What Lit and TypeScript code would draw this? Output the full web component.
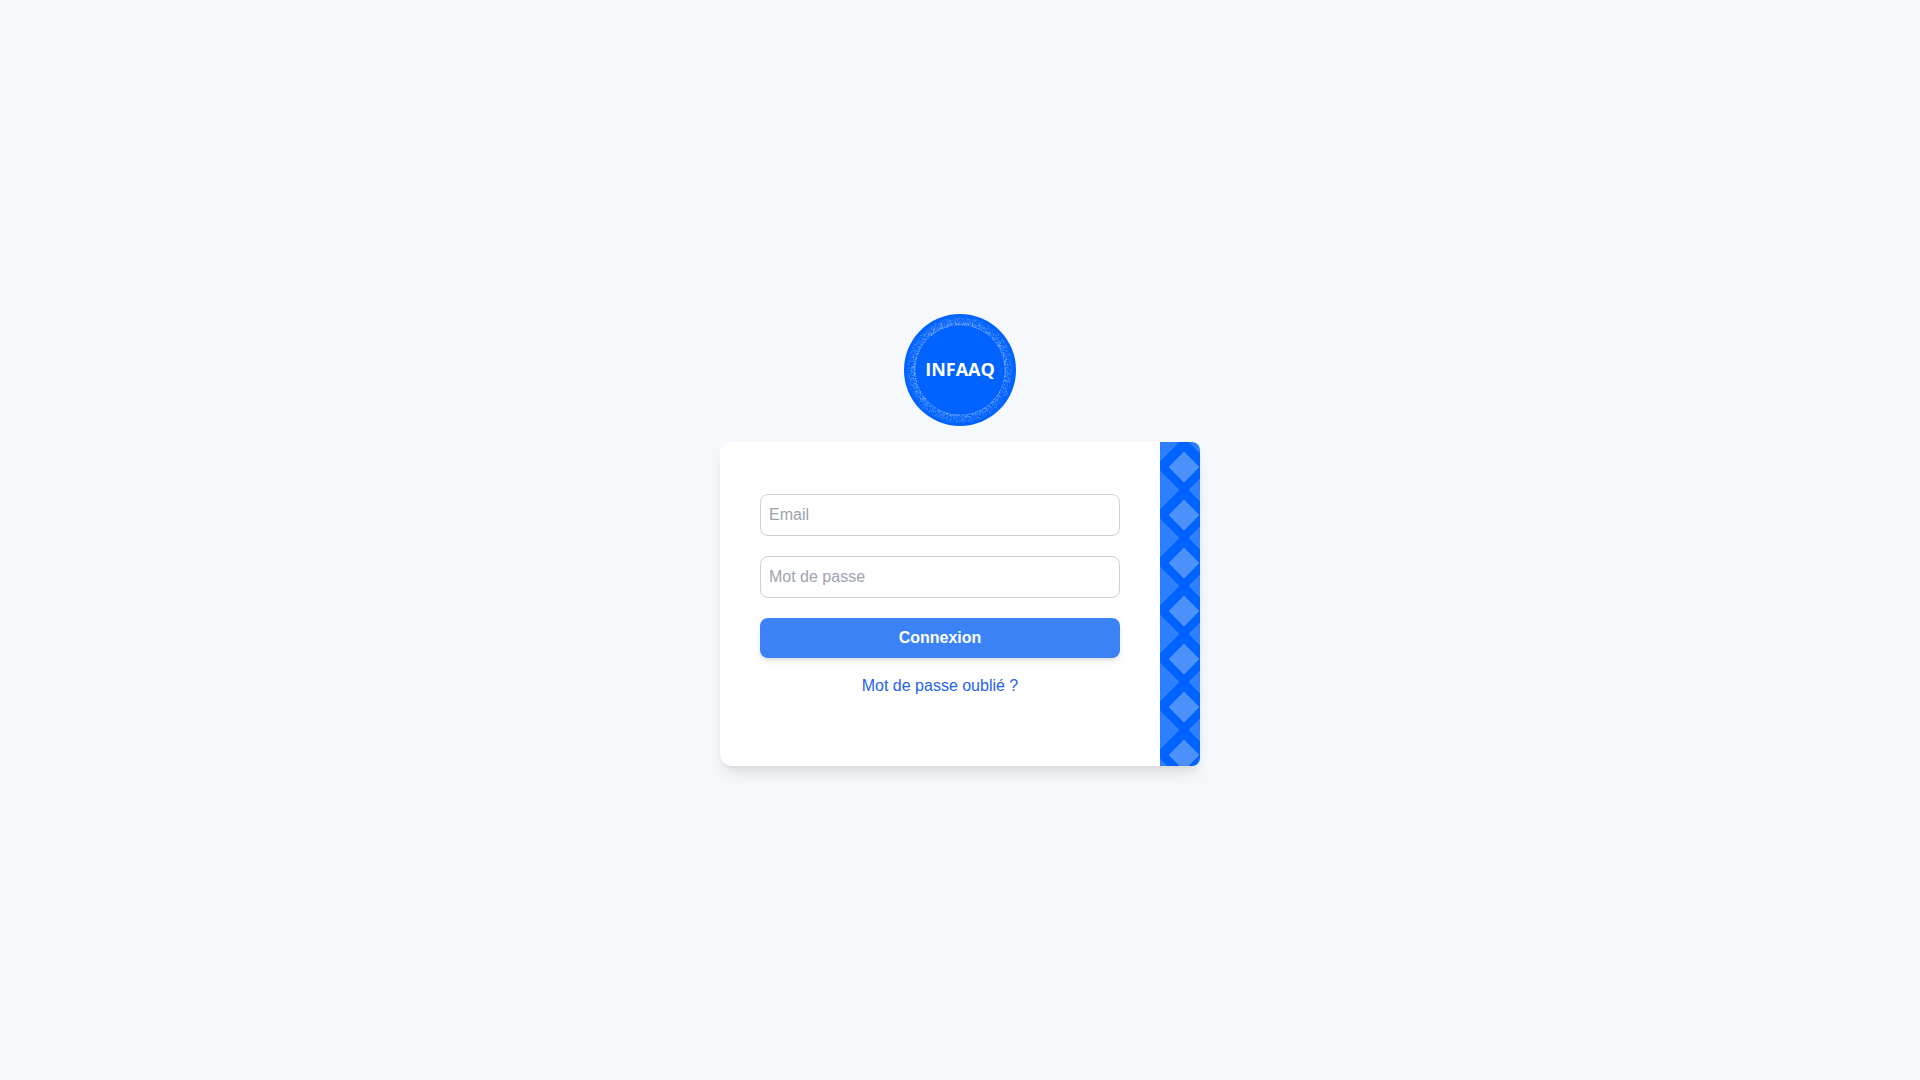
import { LitElement, html, css, svg } from "lit";
import { customElement } from "lit/decorators.js";

interface Speck {
  x: string;
  y: string;
  opacity: string;
}

/** Stippled ring of the seal: dense at its inner edge, fading outwards. */
function stipple(count: number, inner: number, spread: number): Speck[] {
  let seed = 20231;
  const random = () => {
    seed = (seed * 16807) % 2147483647;
    return seed / 2147483647;
  };
  return Array.from({ length: count }, () => {
    const angle = random() * Math.PI * 2;
    const depth = Math.pow(random(), 1.2);
    const radius = inner + depth * spread;
    return {
      x: (56 + Math.cos(angle) * radius).toFixed(1),
      y: (56 + Math.sin(angle) * radius).toFixed(1),
      opacity: (0.5 - depth * 0.25).toFixed(2),
    };
  });
}

const specks = stipple(2200, 45, 8);

@customElement("brand-seal")
export class BrandSeal extends LitElement {
  static styles = css`
    :host {
      display: block;
    }
    .seal {
      display: block;
      width: 112px;
      height: 112px;
    }
    .disc {
      fill: #0062ff;
    }
    .rim {
      fill: none;
      stroke: #fff;
      stroke-opacity: 0.35;
      stroke-dasharray: 1 1;
    }
    .speck {
      fill: #fff;
    }
    .name {
      fill: #fff;
      font-family: "Open Sans", "Liberation Sans", sans-serif;
      font-size: 18px;
      font-weight: 700;
      text-anchor: middle;
    }
  `;

  render() {
    return html`
      <svg class="seal" viewBox="0 0 112 112" role="img" aria-label="INFAAQ">
        <circle class="disc" cx="56" cy="56" r="56"></circle>
        <circle class="rim" cx="56" cy="56" r="45"></circle>
        ${specks.map(
          (s) => svg`<circle class="speck" cx=${s.x} cy=${s.y} r="0.4" opacity=${s.opacity}></circle>`
        )}
        <text class="name" x="56" y="62">INFAAQ</text>
      </svg>
    `;
  }
}

@customElement("app-root")
export class AppRoot extends LitElement {
  static styles = css`
    :host {
      display: block;
      font-family: "Liberation Sans", Arial, sans-serif;
      font-size: 16px;
      line-height: 24px;
    }
    *,
    *::before,
    *::after {
      box-sizing: border-box;
    }
    .page {
      display: flex;
      flex-direction: column;
      align-items: center;
      justify-content: center;
      gap: 16px;
      min-height: 100vh;
      background: #f6f8fc;
    }
    .card {
      display: flex;
      width: 100%;
      max-width: 480px;
      border-radius: 12px 8px 8px 12px;
      background: #fff;
      box-shadow: 0 10px 15px -3px rgba(0, 0, 0, 0.1), 0 4px 6px -4px rgba(0, 0, 0, 0.1);
    }
    .form {
      display: flex;
      flex: 1;
      flex-direction: column;
      gap: 20px;
      min-width: 0;
      padding: 52px 40px 68px;
    }
    .field {
      display: block;
      width: 100%;
      margin: 0;
      padding: 8px;
      border: 1px solid #d0d0d9;
      border-radius: 8px;
      background: #fff;
      color: #111827;
      font: inherit;
      height: 42px;
    }
    .field::placeholder {
      color: #9ca3af;
      opacity: 1;
    }
    .actions {
      display: flex;
      flex-direction: column;
      align-items: center;
      gap: 16px;
    }
    .submit {
      width: 100%;
      margin: 0;
      padding: 8px;
      border: 0;
      border-radius: 8px;
      background: #3b82f6;
      color: #fff;
      font: inherit;
      font-weight: 700;
      cursor: pointer;
      box-shadow: 0 4px 6px -1px rgba(0, 0, 0, 0.1), 0 2px 4px -2px rgba(0, 0, 0, 0.1);
    }
    .forgot {
      color: #2563eb;
      text-decoration: none;
    }
    .band {
      --light: #4d91ff;
      --mid: #2e7fff;
      flex: none;
      width: 40px;
      border-radius: 0 8px 8px 0;
      background-color: #0062ff;
      background-image:
        linear-gradient(45deg, var(--light) 16.5%, transparent 16.5%),
        linear-gradient(135deg, var(--light) 16.5%, transparent 16.5%),
        linear-gradient(225deg, var(--light) 16.5%, transparent 16.5%),
        linear-gradient(315deg, var(--light) 16.5%, transparent 16.5%),
        linear-gradient(45deg, var(--mid) 20%, transparent 20%),
        linear-gradient(135deg, var(--mid) 20%, transparent 20%),
        linear-gradient(225deg, var(--mid) 20%, transparent 20%),
        linear-gradient(315deg, var(--mid) 20%, transparent 20%);
      background-size: 48px 48px;
      background-position: 24px 25px, 24px 25px, 24px 25px, 24px 25px, 0 0, 0 0, 0 0, 0 0;
    }
  `;

  private submit(event: Event) {
    event.preventDefault();
  }

  render() {
    return html`
      <main class="page">
        <brand-seal></brand-seal>
        <section class="card">
          <form class="form" @submit=${this.submit}>
            <input class="field" type="email" name="email" placeholder="Email" aria-label="Email" />
            <input
              class="field"
              type="password"
              name="password"
              placeholder="Mot de passe"
              aria-label="Mot de passe"
            />
            <div class="actions">
              <button class="submit" type="submit">Connexion</button>
              <a class="forgot" href="#">Mot de passe oublié ?</a>
            </div>
          </form>
          <div class="band"></div>
        </section>
      </main>
    `;
  }
}
